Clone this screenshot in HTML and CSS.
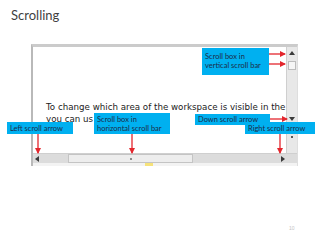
FILE: index.html
```html
<!DOCTYPE html>
<html>
<head>
<meta charset="utf-8">
<link rel="stylesheet" href="styles.css">
</head>
<body>
<div class="slide">
  <h1 class="title">Scrolling</h1>
  <div class="window">
    <div class="pane">
      <div class="doc">
        <p class="line">To change which area of the workspace is visible in the</p>
        <p class="line">you can us</p>
      </div>
      <div class="vbar">
        <span class="tri-up"></span>
        <span class="vthumb"></span>
        <span class="tri-down"></span>
        <span class="ring"></span>
        <span class="dot"></span>
      </div>
      <div class="hbar">
        <div class="hleft"><span class="tri-left"></span></div>
        <div class="hthumb"><span class="hdot"></span></div>
        <div class="hright"><span class="tri-right"></span></div>
      </div>
    </div>
    <div class="status"><span class="mark"></span></div>
  </div>

  <div class="callout c-vbox">Scroll box in<br>vertical scroll bar</div>
  <div class="callout c-hbox">Scroll box in<br>horizontal scroll bar</div>
  <div class="callout c-left">Left scroll arrow</div>
  <div class="callout c-down">Down scroll arrow</div>
  <div class="callout c-right">Right scroll arrow</div>

  <svg class="arrows" width="320" height="240" viewBox="0 0 320 240">
    <defs>
      <marker id="ah" markerWidth="6" markerHeight="6" refX="5" refY="3" orient="auto" markerUnits="userSpaceOnUse">
        <path d="M0,0 L6,3 L0,6 Z" fill="#e3262d"/>
      </marker>
    </defs>
    <g stroke="#e3262d" stroke-width="1.3" fill="none">
      <line x1="269" y1="54" x2="285" y2="54" marker-end="url(#ah)"/>
      <line x1="269" y1="64" x2="285" y2="64" marker-end="url(#ah)"/>
      <line x1="270" y1="119" x2="287" y2="119" marker-end="url(#ah)"/>
      <line x1="280" y1="134" x2="280" y2="153" marker-end="url(#ah)"/>
      <line x1="38" y1="134" x2="38" y2="153" marker-end="url(#ah)"/>
      <line x1="132" y1="134" x2="132" y2="153" marker-end="url(#ah)"/>
    </g>
  </svg>

  <div class="pagenum">10</div>
</div>
</body>
</html>
```

FILE: styles.css
```css
* { box-sizing: border-box; margin: 0; padding: 0; }
html, body { width: 320px; height: 240px; background: #ffffff; overflow: hidden; }

.slide {
  position: relative;
  width: 320px;
  height: 240px;
  padding: 0 0 0 31px;
}

.title {
  font-family: Lato, "Liberation Sans", sans-serif;
  font-weight: 400;
  font-size: 13px;
  line-height: 16px;
  color: #3f3f3f;
  height: 44px;
  padding-top: 7px;
  margin-left: -20px;
}

.window {
  width: 267px;
  height: 122px;
  border-top: 3px solid #cbcbcb;
  border-left: 2px solid #b9b9b9;
  border-right: 1px solid #dedede;
  display: flex;
  flex-direction: column;
}

.pane {
  display: grid;
  grid-template-columns: 1fr 11px;
  grid-template-rows: 106px 10px;
  flex: none;
}

.doc {
  background: #ffffff;
  overflow: hidden;
  padding: 54px 0 0 13px;
  font-family: "DejaVu Sans", Verdana, sans-serif;
  font-size: 8.7px;
  line-height: 12px;
  color: #1b1b1b;
}
.line { white-space: nowrap; }

.vbar {
  background: #e8e8e8;
  border-left: 1px solid #cfcfcf;
  display: flex;
  flex-direction: column;
  align-items: center;
}
.tri-up {
  margin-top: 4px;
  width: 0; height: 0;
  border-left: 3px solid transparent;
  border-right: 3px solid transparent;
  border-bottom: 4px solid #3a3a3a;
}
.vthumb {
  margin-top: 6px;
  width: 8px; height: 9px;
  background: #f6f6f6;
  border: 1px solid #bdbdbd;
}
.tri-down {
  margin-top: 47px;
  width: 0; height: 0;
  border-left: 3px solid transparent;
  border-right: 3px solid transparent;
  border-top: 4px solid #3a3a3a;
}
.ring {
  margin-top: 6px;
  width: 5px; height: 5px;
  border: 1px solid #8a8a8a;
  border-radius: 50%;
}
.dot {
  margin-top: 4px;
  width: 2px; height: 2px;
  background: #555;
}

.hbar {
  grid-column: 1 / -1;
  display: flex;
  background: #dcdcdc;
  border-top: 1px solid #cfcfcf;
}
.hleft {
  width: 35px;
  display: flex;
  align-items: center;
  padding-left: 2px;
}
.tri-left {
  width: 0; height: 0;
  border-top: 3px solid transparent;
  border-bottom: 3px solid transparent;
  border-right: 4px solid #3a3a3a;
}
.hthumb {
  width: 125px;
  background: #ededed;
  border: 1px solid #c4c4c4;
  display: flex;
  align-items: center;
  padding-left: 61px;
}
.hdot { width: 2px; height: 2px; background: #8a8a8a; }
.hright {
  flex: 1;
  display: flex;
  align-items: center;
  justify-content: flex-end;
  padding-right: 12px;
}
.tri-right {
  width: 0; height: 0;
  border-top: 3px solid transparent;
  border-bottom: 3px solid transparent;
  border-left: 4px solid #3a3a3a;
}

.status {
  flex: 1;
  background: #f3f3f3;
  position: relative;
}
.mark {
  position: absolute;
  left: 112px;
  top: 0;
  width: 8px;
  height: 3px;
  background: #f6e27a;
}

.callout {
  position: absolute;
  background: #00b0f0;
  color: #1d2c48;
  font-family: Lato, "Liberation Sans", sans-serif;
  font-size: 7.5px;
  line-height: 9px;
  padding: 0 3px;
  white-space: nowrap;
}
.c-vbox { left: 202px; top: 48px; width: 67px; height: 27px; padding-top: 4px; }
.c-hbox { left: 94px; top: 113px; width: 76px; height: 21px; padding-top: 2px; }
.c-left { left: 7px; top: 122px; width: 66px; height: 12px; padding-top: 1.5px; }
.c-down { left: 195px; top: 114px; width: 75px; height: 11px; padding-top: 1px; }
.c-right { left: 245px; top: 122px; width: 70px; height: 12px; padding-top: 1.5px; }

.arrows { position: absolute; left: 0; top: 0; pointer-events: none; }

.pagenum {
  position: absolute;
  left: 289px;
  top: 225px;
  font-family: "Liberation Sans", sans-serif;
  font-size: 5px;
  color: #c4c4c4;
}
```
